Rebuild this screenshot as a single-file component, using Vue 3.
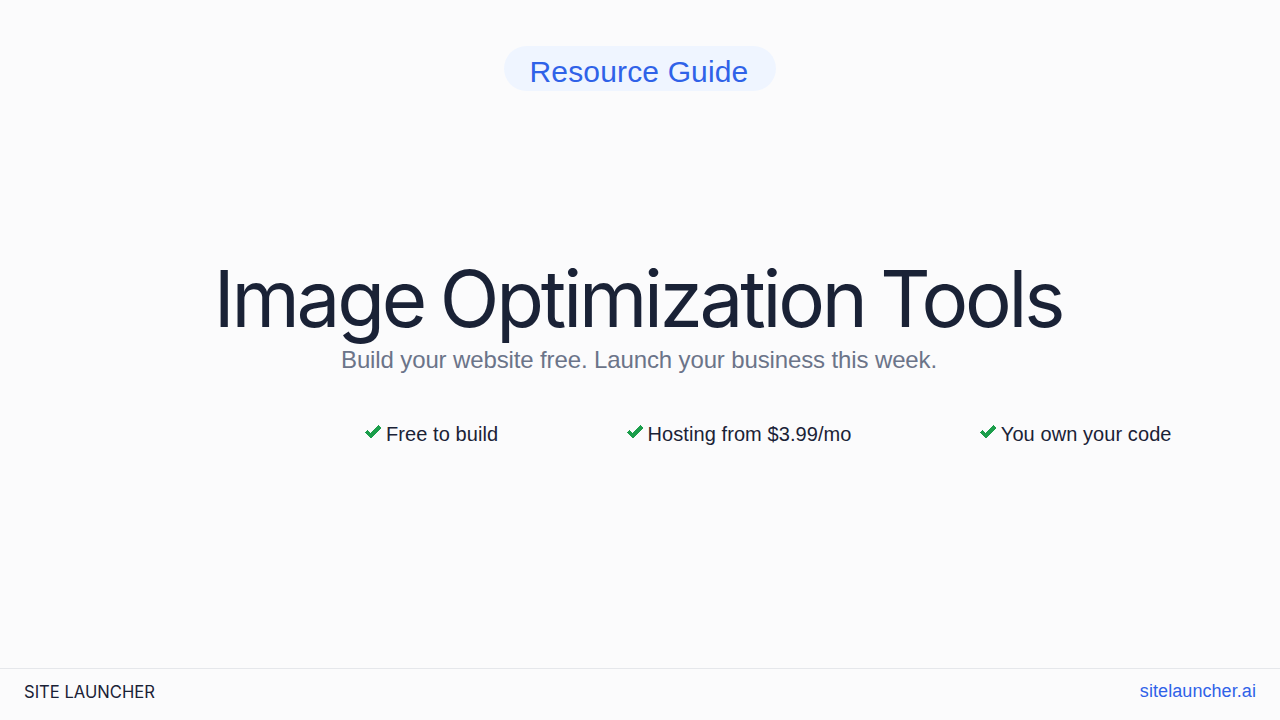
<script setup>
const perks = ['Free to build', 'Hosting from $3.99/mo', 'You own your code']
</script>

<template>
  <div class="page">
    <div class="top">
      <span class="badge">Resource Guide</span>
    </div>
    <main class="hero">
      <h1 class="title">Image Optimization Tools</h1>
      <p class="subtitle">Build your website free. Launch your business this week.</p>
      <ul class="perks">
        <li v-for="perk in perks" :key="perk" class="perk">
          <svg class="check" width="17" height="14" viewBox="0 0 17 14" shape-rendering="crispEdges">
            <path d="M0 8 L2.5 5 L5.5 8 L13.5 0 L16.5 3 L6 14 Z" fill="#1b9e4b" />
          </svg>
          <span>{{ perk }}</span>
        </li>
      </ul>
    </main>
    <footer class="footer">
      <span class="brand">SITE LAUNCHER</span>
      <span class="url">sitelauncher.ai</span>
    </footer>
  </div>
</template>

<style>
html,
body {
  margin: 0;
  background: #fbfbfc;
}
</style>

<style scoped>
.page {
  width: 1280px;
  height: 720px;
  display: flex;
  flex-direction: column;
  background: #fbfbfc;
  font-family: 'Liberation Sans', Arial, sans-serif;
  color: #1a2236;
  overflow: hidden;
}

.top {
  display: flex;
  justify-content: center;
  padding-top: 46px;
}

.badge {
  padding: 7px 28px 1px 26px;
  border-radius: 23px;
  background: #eff5ff;
  color: #2f62e8;
  font-size: 30px;
  line-height: 37px;
  letter-spacing: 0.15px;
}

.hero {
  flex: 1;
  padding-top: 160px;
  text-align: center;
}

.title {
  margin: 0;
  padding-right: 4px;
  font-family: Inter, sans-serif;
  font-size: 78px;
  font-weight: 400;
  line-height: 96px;
  letter-spacing: -3.2px;
  word-spacing: -3px;
}

.subtitle {
  margin: -1px 0 0;
  padding-right: 2px;
  color: #6b7489;
  font-size: 24px;
  line-height: 28px;
  letter-spacing: -0.125px;
}

.perks {
  display: flex;
  gap: 128.3px;
  margin: 48px 0 0;
  padding: 0 0 0 365px;
  list-style: none;
}

.perk {
  display: flex;
  align-items: center;
  gap: 4px;
  font-size: 20px;
  line-height: 24px;
  letter-spacing: 0.08px;
  white-space: nowrap;
}

.check {
  flex: none;
  margin-top: -4px;
}

.footer {
  display: flex;
  justify-content: space-between;
  align-items: center;
  height: 45px;
  padding: 0 24px 6px;
  border-top: 1px solid #e5e7eb;
}

.brand {
  font-family: Inter, sans-serif;
  font-size: 16.6px;
}

.url {
  color: #2f62e8;
  font-size: 18px;
  letter-spacing: 0.07px;
}
</style>
